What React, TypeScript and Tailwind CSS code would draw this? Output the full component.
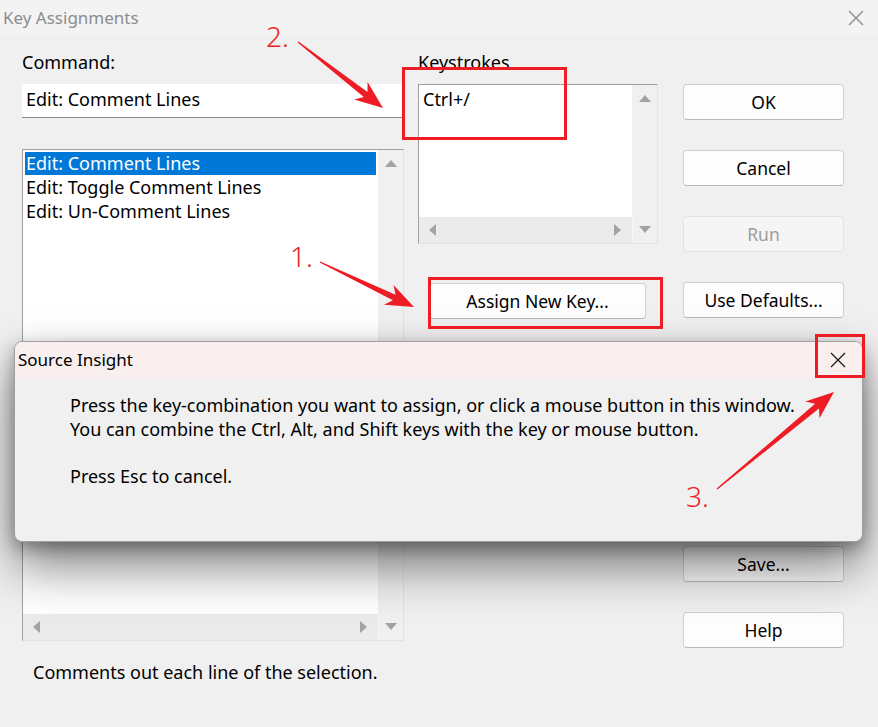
import React from "react";

const FONT = { fontFamily: '"Noto Sans", "Open Sans", sans-serif' };

function Btn({ label, disabled, className = "" }: { label: string; disabled?: boolean; className?: string }) {
  return (
    <div
      className={
        "h-[36px] flex items-center justify-center rounded-[4px] border text-[17.5px] " +
        (disabled
          ? "bg-[#f5f5f5] border-[#e3e3e3] text-[#9d9d9d]"
          : "bg-[#fdfdfd] border-[#d0d0d0] border-b-[#b8b8b8] text-black") +
        " " +
        className
      }
    >
      {label}
    </div>
  );
}

function Tri({ dir }: { dir: "up" | "down" | "left" | "right" }) {
  const pts =
    dir === "up"
      ? "0,9 6,2 12,9"
      : dir === "down"
      ? "0,2 12,2 6,9"
      : dir === "left"
      ? "9,0 9,12 2,6"
      : "2,0 2,12 9,6";
  return (
    <svg width="12" height="12" viewBox="0 0 12 12">
      <polygon points={pts} fill="#a3a3a3" />
    </svg>
  );
}

function ScrollBox({ children, className = "" }: { children?: React.ReactNode; className?: string }) {
  return (
    <div className={"flex flex-col border border-[#a0a0a0] border-r-[#e3e3e3] border-b-[#e3e3e3] bg-white " + className}>
      <div className="flex flex-1 min-h-0">
        <div className="flex-1 min-w-0 p-[2px]">{children}</div>
        <div className="w-[25px] bg-[#f0f0f0] flex flex-col items-center justify-start pt-[8px]">
          <Tri dir="up" />
        </div>
      </div>
      <div className="flex h-[26px]">
        <div className="flex-1 bg-[#ebebeb] flex items-center justify-between px-[8px]">
          <Tri dir="left" />
          <Tri dir="right" />
        </div>
        <div className="w-[25px] bg-[#f0f0f0] border-l border-[#f7f7f7] flex items-center justify-center">
          <Tri dir="down" />
        </div>
      </div>
    </div>
  );
}

function arrowPoints(sx: number, sy: number, tx: number, ty: number) {
  const dx = tx - sx;
  const dy = ty - sy;
  const len = Math.hypot(dx, dy);
  const ux = dx / len;
  const uy = dy / len;
  const nx = -uy;
  const ny = ux;
  const headLen = 28;
  const headW = 22;
  const shaftW = 6;
  const bx = tx - ux * headLen;
  const by = ty - uy * headLen;
  const nbx = tx - ux * (headLen - 6);
  const nby = ty - uy * (headLen - 6);
  const p = (x: number, y: number) => `${x.toFixed(1)},${y.toFixed(1)}`;
  return [
    p(sx + nx * 0.6, sy + ny * 0.6),
    p(nbx + (nx * shaftW) / 2, nby + (ny * shaftW) / 2),
    p(bx + (nx * headW) / 2, by + (ny * headW) / 2),
    p(tx, ty),
    p(bx - (nx * headW) / 2, by - (ny * headW) / 2),
    p(nbx - (nx * shaftW) / 2, nby - (ny * shaftW) / 2),
    p(sx - nx * 0.6, sy - ny * 0.6),
  ].join(" ");
}

export default function App() {
  const red = "#ee1d25";
  return (
    <div className="relative w-[878px] h-[727px] bg-[#f0f0f0] overflow-hidden select-none" style={FONT}>
      {/* title bar */}
      <div className="h-[35px] bg-[#f3f3f3] flex items-center justify-between pl-[3px] pr-[14px]">
        <span className="text-[17px] text-[#8d8d8d]">Key Assignments</span>
        <svg width="16" height="16" viewBox="0 0 16 16">
          <path d="M1 1 L15 15 M15 1 L1 15" stroke="#8a8a8a" strokeWidth="1.3" />
        </svg>
      </div>

      {/* body */}
      <div className="flex pl-[22px] pt-[15px]">
        {/* left column */}
        <div className="w-[382px] flex flex-col">
          <div className="h-[24px] text-[18px] leading-[24px] text-black">Command:</div>
          <div className="mt-[10px] h-[34px] bg-white border-b border-[#8c8c8c] flex items-center pl-[4px] pb-[3px] text-[18px] text-black">
            Edit: Comment Lines
          </div>
          <ScrollBox className="mt-[31px] h-[492px]">
            <div className="text-[18px] leading-[24px] text-black">
              <div className="bg-[#0078d7] text-white pl-[1px] h-[23px] leading-[23px]">Edit: Comment Lines</div>
              <div className="pl-[1px]">Edit: Toggle Comment Lines</div>
              <div className="pl-[1px]">Edit: Un-Comment Lines</div>
            </div>
          </ScrollBox>
          <div className="mt-[19px] pl-[11px] text-[18px] leading-[24px] text-black">
            Comments out each line of the selection.
          </div>
        </div>

        {/* middle column */}
        <div className="ml-[14px] w-[240px] flex flex-col">
          <div className="h-[24px] text-[18px] leading-[24px] text-black">Keystrokes</div>
          <ScrollBox className="mt-[10px] h-[160px]">
            <div className="text-[18px] leading-[24px] text-black pl-[2px]">Ctrl+/</div>
          </ScrollBox>
          <div className="mt-[39px] ml-[11px] w-[217px]">
            <Btn label="Assign New Key..." />
          </div>
        </div>

        {/* right column */}
        <div className="ml-[25px] w-[161px] flex flex-col gap-[30px] pt-[34px]">
          <Btn label="OK" />
          <Btn label="Cancel" />
          <Btn label="Run" disabled />
          <Btn label="Use Defaults..." />
          <Btn label="Delete" />
          <Btn label="Delete All" />
          <Btn label="Load..." />
          <Btn label="Save..." />
          <Btn label="Help" />
        </div>
      </div>

      {/* Source Insight popup */}
      <div className="absolute left-[14px] top-[341px] w-[849px] h-[201px] rounded-[8px] border border-[#a0a0a0] bg-[#f0f0f0] overflow-hidden shadow-[0_24px_50px_rgba(0,0,0,0.5),0_6px_16px_rgba(0,0,0,0.3)]">
        <div className="h-[36px] bg-[#f8efee] flex items-center justify-between pl-[3px] pr-[16px]">
          <span className="text-[17px] text-black">Source Insight</span>
          <svg width="16" height="16" viewBox="0 0 16 16">
            <path d="M1 1 L15 15 M15 1 L1 15" stroke="#1a1a1a" strokeWidth="1.3" />
          </svg>
        </div>
        <div className="pl-[55px] pt-[15px] text-[18px] leading-[24px] text-black">
          <div>Press the key-combination you want to assign, or click a mouse button in this window.</div>
          <div>You can combine the Ctrl, Alt, and Shift keys with the key or mouse button.</div>
          <div className="mt-[23px]">Press Esc to cancel.</div>
        </div>
      </div>

      {/* annotations */}
      <svg className="absolute left-0 top-0 pointer-events-none" width="878" height="727" viewBox="0 0 878 727">
        <rect x="403.5" y="68.5" width="162" height="70" fill="none" stroke={red} strokeWidth="3" />
        <rect x="429.5" y="278.5" width="232" height="49" fill="none" stroke={red} strokeWidth="3" />
        <rect x="816.5" y="335.5" width="47" height="41" fill="none" stroke={red} strokeWidth="3" />
        <polygon points={arrowPoints(298, 42, 383, 108)} fill={red} />
        <polygon points={arrowPoints(320, 262, 414, 307)} fill={red} />
        <polygon points={arrowPoints(717, 489, 834, 392)} fill={red} />
      </svg>
      <div className="absolute left-[266px] top-[18px] text-[28px] leading-[36px] font-light pointer-events-none" style={{ color: red }}>2.</div>
      <div className="absolute left-[290px] top-[238px] text-[28px] leading-[36px] font-light pointer-events-none" style={{ color: red }}>1.</div>
      <div className="absolute left-[686px] top-[478px] text-[28px] leading-[36px] font-light pointer-events-none" style={{ color: red }}>3.</div>
    </div>
  );
}
